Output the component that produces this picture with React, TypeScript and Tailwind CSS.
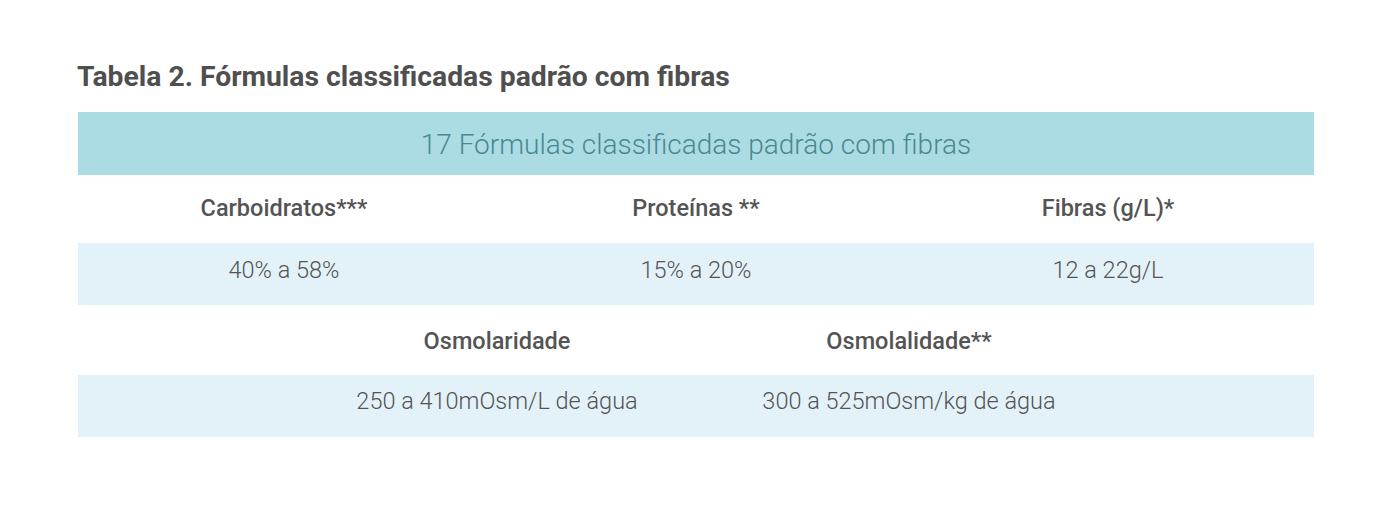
import React from 'react'

const topCols = [
  { label: 'Carboidratos***', value: '40% a 58%' },
  { label: 'Proteínas **', value: '15% a 20%' },
  { label: 'Fibras (g/L)*', value: '12 a 22g/L' }
]

const bottomCols = [
  { label: 'Osmolaridade', value: '250 a 410mOsm/L de água' },
  { label: 'Osmolalidade**', value: '300 a 525mOsm/kg de água' }
]

export default function App() {
  return (
    <div className="w-[1381px] h-[521px] bg-white font-['Roboto',sans-serif] text-[#545454]">
      <div className="pl-[78px] pr-[67px] pt-[57px]">
        <h1 className="text-[28.3px] leading-[40px] font-bold text-[#4f4f4f] -ml-[1px]">
          Tabela 2. Fórmulas classificadas padrão com fibras
        </h1>

        <div className="mt-[15px]">
          {/* Header */}
          <div className="h-[63px] bg-[#acdce3] flex items-center justify-center pt-[2px]">
            <span className="text-[28px] leading-none font-light text-[#4b8891]">17 Fórmulas classificadas padrão com fibras</span>
          </div>

          {/* Top section */}
          <div className="grid grid-cols-3 h-[68px] items-center">
            {topCols.map(c => (
              <div key={c.label} className="text-center text-[23.5px] leading-none font-medium">{c.label}</div>
            ))}
          </div>
          <div className="grid grid-cols-3 h-[62px] items-center bg-[#e3f2f8] pb-[6px]">
            {topCols.map(c => (
              <div key={c.label} className="text-center text-[23.5px] leading-none font-light">{c.value}</div>
            ))}
          </div>

          {/* Bottom section */}
          <div className="grid grid-cols-[213px_412px_412px_1fr] h-[70px] items-center pt-[3px]">
            <div />
            {bottomCols.map(c => (
              <div key={c.label} className="text-center text-[23.5px] leading-none font-medium">{c.label}</div>
            ))}
            <div />
          </div>
          <div className="grid grid-cols-[213px_412px_412px_1fr] h-[62px] items-center bg-[#e3f2f8] pb-[8px]">
            <div />
            {bottomCols.map(c => (
              <div key={c.label} className="text-center text-[23.5px] leading-none font-light">{c.value}</div>
            ))}
            <div />
          </div>
        </div>
      </div>
    </div>
  )
}
